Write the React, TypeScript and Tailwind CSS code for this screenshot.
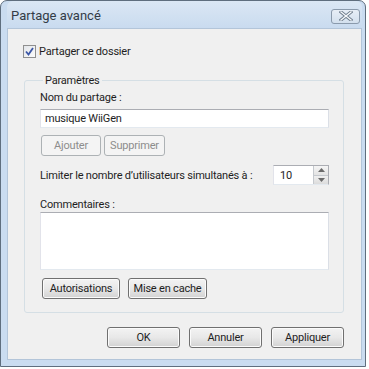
import React from 'react';

const btn =
  'h-[21px] rounded-[3px] border border-[#707070] bg-gradient-to-b from-[#f3f3f3] via-[#e8e8e8] to-[#d2d2d2] text-[11px] text-[#1e1e1e] shadow-[inset_0_0_0_1px_#fbfbfb] flex items-center justify-center';

const disabledBtn =
  'h-[21px] rounded-[3px] border border-[#adb2b5] bg-[#f4f4f4] text-[11px] text-[#8d8d8d] flex items-center justify-center';

function CloseIcon() {
  return (
    <svg width="14" height="10" viewBox="0 0 14 10">
      <path d="M2 1 L12 9 M12 1 L2 9" stroke="#6f7e8e" strokeWidth="3.2" strokeLinecap="square" />
      <path d="M2 1 L12 9 M12 1 L2 9" stroke="#f7f9fb" strokeWidth="1.4" strokeLinecap="square" />
    </svg>
  );
}

function Checkbox() {
  return (
    <div className="w-[13px] h-[13px] border border-[#8f8f8f] bg-gradient-to-br from-[#e3e6ea] to-[#fbfbfb] flex items-center justify-center">
      <svg width="9" height="9" viewBox="0 0 9 9">
        <path d="M1 4.5 L3.5 7.5 L8 1" fill="none" stroke="#3b56a6" strokeWidth="1.8" />
      </svg>
    </div>
  );
}

export default function App() {
  return (
    <div className="w-[369px] h-[369px] bg-white font-['Segoe_UI','Roboto',sans-serif] text-[11px] tracking-[-0.2px] text-[#1e1e1e] leading-[15px]">
      <div className="w-[366px] h-[367px] border border-[#5f6e7e] rounded-t-[7px] bg-[#cadcf0] pl-[6px] pr-[3px] pb-[6px] flex flex-col">
        {/* Title bar */}
        <div className="h-[27px] flex items-center justify-between pl-[4px] pr-[2px] rounded-t-[6px] bg-gradient-to-b from-[#dbe7f4] to-[#c9dbef]">
          <span className="text-[13px] tracking-normal text-[#333c47] pt-[2px]">Partage avancé</span>
          <div className="w-[29px] h-[15px] mt-[3px] rounded-[3px] border border-[#8a9aac] bg-gradient-to-b from-[#e7eef6] to-[#d3e0ee] flex items-center justify-center">
            <CloseIcon />
          </div>
        </div>

        {/* Body */}
        <div className="flex-1 bg-[#f0f0f0] border border-[#b3c5d9] flex flex-col">
          <div className="mt-[15px] ml-[15px] h-[14px] flex items-center gap-[3px]">
            <Checkbox />
            <span>Partager ce dossier</span>
          </div>

          <fieldset className="mt-[15px] ml-[16px] mr-[17px] border border-[#d5dfe5] rounded-[3px] pl-[15px] pr-[14px] pb-[13px]">
            <legend className="ml-[3px] px-[2px] leading-[15px]">Paramètres</legend>
            <div className="mt-[2px] h-[15px]">Nom du partage :</div>
            <div className="mt-[4px] h-[19px] border border-[#abadb3] border-l-[#e2e3ea] border-b-[#e3e9ef] border-r-[#dbdfe6] bg-white flex items-center pl-[4px]">
              musique WiiGen
            </div>
            <div className="mt-[7px] flex gap-[3px] ml-[1px]">
              <div className={`${disabledBtn} w-[60px]`}>Ajouter</div>
              <div className={`${disabledBtn} w-[61px]`}>Supprimer</div>
            </div>
            <div className="mt-[9px] flex items-center justify-between">
              <span className="pt-[1px] whitespace-nowrap">Limiter le nombre d’utilisateurs simultanés à :</span>
              <div className="w-[56px] h-[20px] border border-[#abadb3] border-b-[#e3e9ef] border-l-[#e2e3ea] bg-white flex">
                <span className="flex-1 pl-[6px] pt-[2px]">10</span>
                <div className="w-[15px] flex flex-col border-l border-[#c5c9ce]">
                  <div className="flex-1 flex items-center justify-center bg-gradient-to-b from-[#f5f5f5] to-[#e3e3e3] border-b border-[#c5c9ce]">
                    <svg width="7" height="4" viewBox="0 0 7 4"><path d="M0 4 L3.5 0 L7 4 Z" fill="#6a6a6a" /></svg>
                  </div>
                  <div className="flex-1 flex items-center justify-center bg-gradient-to-b from-[#f0f0f0] to-[#dcdcdc]">
                    <svg width="7" height="4" viewBox="0 0 7 4"><path d="M0 0 L3.5 4 L7 0 Z" fill="#6a6a6a" /></svg>
                  </div>
                </div>
              </div>
            </div>
            <div className="mt-[13px] h-[14px] leading-[14px]">Commentaires :</div>
            <div className="h-[58px] border border-[#abadb3] border-b-[#e3e9ef] border-l-[#e2e3ea] border-r-[#dbdfe6] bg-white" />
            <div className="mt-[8px] ml-[2px] flex gap-[8px]">
              <div className={`${btn} w-[78px] h-[20px]`}>Autorisations</div>
              <div className={`${btn} w-[79px] h-[20px]`}>Mise en cache</div>
            </div>
          </fieldset>

          <div className="mt-[14px] mr-[17px] flex justify-end gap-[9px]">
            <div className={`${btn} w-[73px]`}>OK</div>
            <div className={`${btn} w-[73px]`}>Annuler</div>
            <div className={`${btn} w-[73px]`}>Appliquer</div>
          </div>
        </div>
      </div>
    </div>
  );
}
